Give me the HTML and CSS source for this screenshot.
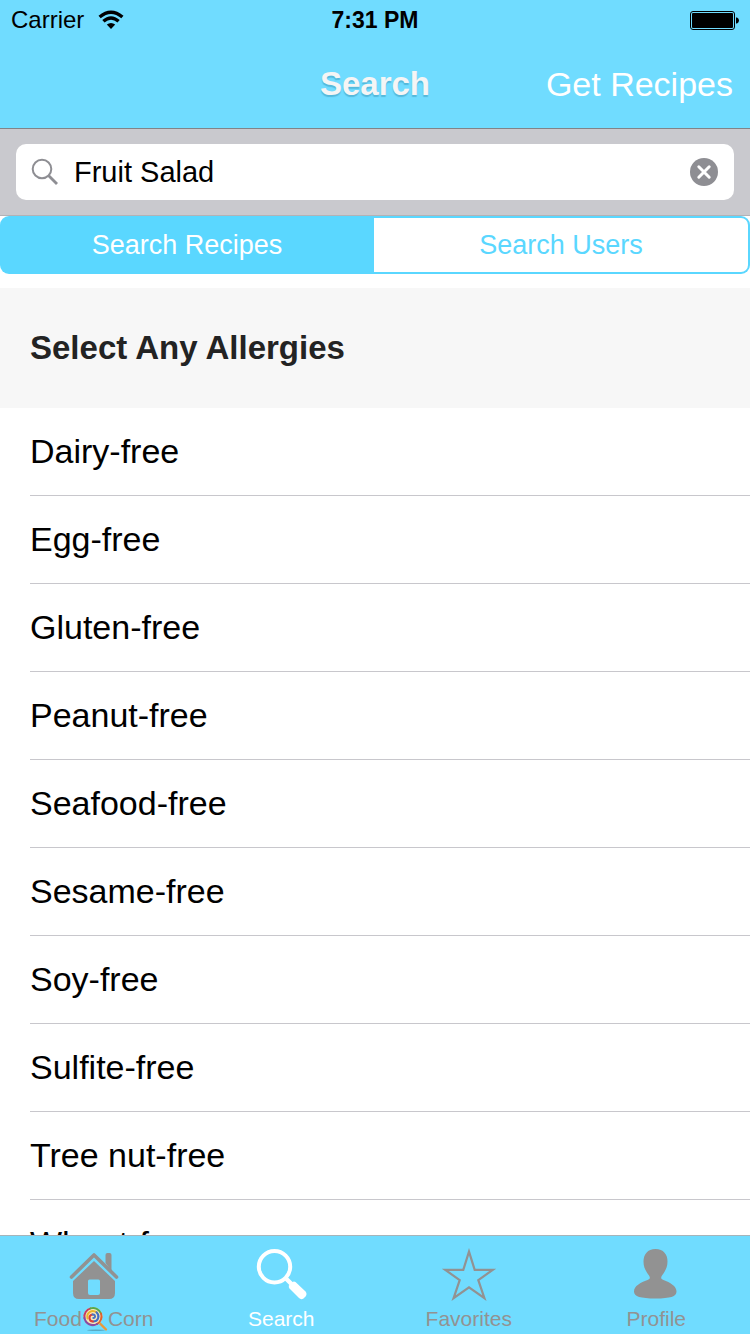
FILE: index.html
```html
<!DOCTYPE html>
<html lang="en">
<head>
<meta charset="utf-8">
<meta name="viewport" content="width=device-width, initial-scale=1">
<title>Search</title>
<link rel="stylesheet" href="styles.css">
</head>
<body>
<header class="top">
  <div class="status">
    <div class="carrier">
      <span>Carrier</span>
      <svg class="wifi" width="26" height="20" viewBox="0 0 26 20" aria-hidden="true">
        <g fill="none" stroke="#000" stroke-width="3.400">
          <path d="M1.600 7Q13 -2.600 24.400 7"/>
          <path d="M5.400 11.200Q13 4.600 20.600 11.200"/>
        </g>
        <path d="M8.800 14.600Q13 11.200 17.200 14.600L13 19Z"/>
      </svg>
    </div>
    <time class="clock">7:31 PM</time>
    <svg class="battery" width="50" height="20" viewBox="0 0 50 20" aria-hidden="true">
      <rect x="1.500" y="1.500" width="44" height="18" rx="2.500" fill="none" stroke="#000"/>
      <rect x="3" y="3" width="41" height="15" rx="1"/>
      <path d="M47 7.500h1q2 .8 2 3t-2 3h-1z"/>
    </svg>
  </div>
  <nav class="navbar">
    <h1 class="title">Search</h1>
    <button class="action" type="button">Get Recipes</button>
  </nav>
</header>

<form class="searchbar" role="search">
  <div class="field">
    <svg width="28" height="28" viewBox="0 0 28 28" aria-hidden="true">
      <circle cx="11" cy="11" r="9.300" fill="none" stroke="#8e8e93" stroke-width="2"/>
      <path d="M17.500 17.500L26 26" stroke="#8e8e93" stroke-width="2.800"/>
    </svg>
    <input class="query" type="text" value="Fruit Salad" aria-label="Search">
    <button class="clear" type="button" aria-label="Clear text">
      <svg width="28" height="28" viewBox="0 0 28 28" aria-hidden="true">
        <circle cx="14" cy="14" r="14" fill="#8e8e93"/>
        <path d="M8.800 8.800L19.200 19.200M19.200 8.800L8.800 19.200" stroke="#fff" stroke-width="3" stroke-linecap="round"/>
      </svg>
    </button>
  </div>
</form>

<div class="segments">
  <button class="segment selected" type="button" aria-pressed="true">Search Recipes</button>
  <button class="segment" type="button" aria-pressed="false">Search Users</button>
</div>

<main class="content">
  <h2 class="section">Select Any Allergies</h2>
  <ul class="list">
    <li class="row">Dairy-free</li>
    <li class="row">Egg-free</li>
    <li class="row">Gluten-free</li>
    <li class="row">Peanut-free</li>
    <li class="row">Seafood-free</li>
    <li class="row">Sesame-free</li>
    <li class="row">Soy-free</li>
    <li class="row">Sulfite-free</li>
    <li class="row">Tree nut-free</li>
    <li class="row">Wheat-free</li>
  </ul>
</main>

<nav class="tabs">
  <button class="tab" type="button">
    <svg width="56" height="56" viewBox="0 0 56 56" aria-hidden="true">
      <path d="M5.500 29L28 7L50.500 29" fill="none" stroke="#929292" stroke-width="3.600" stroke-linecap="round" stroke-linejoin="round"/>
      <path d="M39.500 15V7q0-2 2-2h2q2 0 2 2v16z" fill="#929292"/>
      <path fill="#929292" fill-rule="evenodd" d="M28 13L49 33V45q0 6-6 6H13q-6 0-6-6V33zM23.500 31.500q-1.500 0-1.500 1.500V45q0 2 2 2h8q2 0 2-2V33q0-1.500-1.500-1.500z"/>
    </svg>
    <span class="label">Food<svg class="lolly" width="26" height="26" viewBox="0 0 26 26" aria-hidden="true">
        <ellipse cx="14" cy="24.200" rx="9" ry=".8" fill="#427788" opacity=".5"/>
        <path d="M17 16.500L24 23.500" stroke="#e89a3b" stroke-width="2.400" stroke-linecap="round"/>
        <circle cx="11" cy="10.500" r="9.500" fill="#f7e8bb"/>
        <g transform="translate(.5 0)" fill="none" stroke-width="2" stroke-linecap="round">
          <path d="M2 12A8.500 8.500 0 0 1 8 2.400" stroke="#c63b62"/>
          <path d="M8 2.400A8.500 8.500 0 0 1 18.500 7.500" stroke="#56a84c"/>
          <path d="M18.500 7.500A8.500 8.500 0 0 1 14.500 18" stroke="#e0612f"/>
          <path d="M14.500 18A8.500 8.500 0 0 1 2 12" stroke="#894ba2"/>
          <path d="M5 12.500C3.500 6 10 3.300 14 6.300" stroke="#eab52c"/>
          <path d="M14 6.300C18 10 15.500 15.500 10.500 15.500" stroke="#416ec4"/>
          <path d="M10.500 15.500C6 15.300 5.800 9 10 8.500" stroke="#dc4138"/>
          <path d="M10 8.500C13 8.200 13.500 11.800 10.800 12" stroke="#4a74c4"/>
        </g>
      </svg>Corn</span>
  </button>
  <button class="tab active" type="button">
    <svg width="56" height="56" viewBox="0 0 56 56" aria-hidden="true">
      <circle cx="21.500" cy="18.700" r="15.700" fill="none" stroke="#fff" stroke-width="4"/>
      <path d="M32.500 30L38.500 36" stroke="#fff" stroke-width="4.500"/>
      <path d="M39.500 37L48.500 46" stroke="#fff" stroke-width="6"/>
      <path d="M36 37.500L39.500 34Q41 33 42.500 34L52.500 43.500Q54.500 46 52.500 48.500L50.500 50.500Q48 52 46 50L36.500 40.500Q35.200 39 36 37.500Z" fill="#fff"/>
    </svg>
    <span class="label">Search</span>
  </button>
  <button class="tab" type="button">
    <svg width="56" height="56" viewBox="0 0 56 56" aria-hidden="true">
      <path d="M28 3.600L33.700 21.800H51.800L37.300 32.200L43.400 50.200L28 39.300L12.600 50.200L18.700 32.200L4.200 21.800H22.300Z" fill="none" stroke="#929292" stroke-width="2.200"/>
    </svg>
    <span class="label">Favorites</span>
  </button>
  <button class="tab" type="button">
    <svg width="56" height="56" viewBox="0 0 56 56" aria-hidden="true">
      <path fill="#929292" d="M27.500 1C19.500 1 15.500 6.500 15.500 13.500C15.500 20 18.500 24 21 27.500C22.500 30 22 31 19.500 32C12.500 34.500 6 38 6 43.500C6 48.500 12.500 50.500 27.500 50.500S48.500 48.500 48.500 43.500C48.500 38 42 34.500 35.500 32C33 31 32.500 30 34 27.500C36.500 24 39.500 20 39.500 13.500C39.500 6.500 35.500 1 27.500 1Z"/>
    </svg>
    <span class="label">Profile</span>
  </button>
</nav>
</body>
</html>
```
FILE: styles.css
```css
* {
  box-sizing: border-box;
}

body {
  margin: 0;
  height: 100vh;
  display: flex;
  flex-direction: column;
  background: #fff;
  color: #000;
  font-family: "Liberation Sans", Arial, sans-serif;
}

button,
input {
  margin: 0;
  padding: 0;
  border: 0;
  background: none;
  color: inherit;
  font: inherit;
}

svg {
  display: block;
  flex: none;
}

.top {
  flex: none;
  background: #70dcff;
  border-bottom: 1px solid #808388;
}

.status,
.navbar {
  display: grid;
  grid-template-columns: 1fr auto 1fr;
  align-items: center;
}

.status {
  height: 40px;
  padding: 0 11px;
  font-size: 24px;
}

.carrier {
  display: flex;
  align-items: center;
  gap: 14px;
}

.clock {
  font-size: 23px;
  font-weight: bold;
}

.battery {
  justify-self: end;
}

.navbar {
  height: 88px;
  padding: 0 17px;
  font-size: 34px;
}

.title {
  grid-column: 2;
  margin: 0;
  color: #f5f5f5;
  font-size: 33px;
  font-weight: bold;
  text-shadow: 0 2px 1px rgba(0, 80, 110, 0.25);
}

.action {
  justify-self: end;
  color: #fff;
}

.searchbar {
  flex: none;
  padding: 15px 16px;
  background: #c9c9ce;
  border-bottom: 1px solid #b2b2b6;
}

.field {
  display: flex;
  align-items: center;
  height: 56px;
  padding: 0 16px 0 15px;
  gap: 15px;
  background: #fff;
  border-radius: 10px;
}

.query {
  flex: 1;
  min-width: 0;
  height: 56px;
  font-size: 29px;
  outline: 0;
}

.segments {
  flex: none;
  display: flex;
  height: 58px;
  margin-bottom: 14px;
}

.segment {
  flex: 1;
  border: 2px solid #5ad7ff;
  border-left: 0;
  border-radius: 0 9px 9px 0;
  color: #5ad7ff;
  font-size: 27px;
}

.segment.selected {
  border: 0;
  border-radius: 9px 0 0 9px;
  background: #5ad7ff;
  color: #fff;
}

.content {
  flex: 1;
  min-height: 0;
  overflow-y: auto;
  scrollbar-width: none;
}

.section {
  margin: 0;
  padding: 0 30px;
  background: #f7f7f7;
  color: #232323;
  font-size: 33px;
  line-height: 120px;
}

.list {
  margin: 0;
  padding: 0 0 0 30px;
  list-style: none;
}

.row {
  height: 88px;
  border-bottom: 1px solid #c8c7cc;
  font-size: 34px;
  line-height: 86px;
}

.tabs {
  flex: none;
  display: grid;
  grid-template-columns: repeat(4, 1fr);
  background: #70dcff;
  border-top: 1px solid #a6b4ba;
}

.tab {
  display: flex;
  flex-direction: column;
  align-items: center;
  padding: 12px 0 0;
  color: #929292;
  font-size: 21px;
}

.tab.active {
  color: #fff;
}

.label {
  display: flex;
  align-items: center;
  height: 30px;
}
```
